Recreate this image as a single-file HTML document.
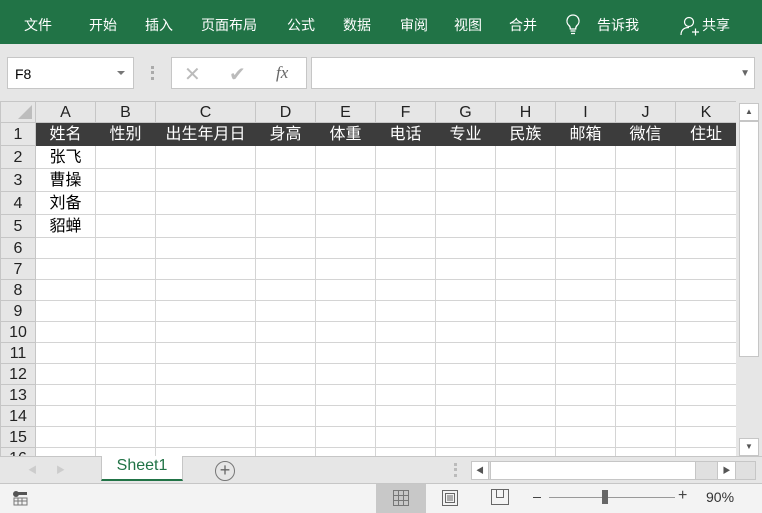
<!DOCTYPE html>
<html><head><meta charset="utf-8"><style>
*{margin:0;padding:0;box-sizing:border-box}
body{width:762px;height:513px;overflow:hidden;background:#e6e6e6;font-family:"Liberation Sans","Noto Sans CJK SC",sans-serif;position:relative}
.rib{position:absolute;left:0;top:0;width:762px;height:44px;background:#217346;color:#fff;font-size:14px}
.rib span{position:absolute;top:15px}
.abs{position:absolute}
table{position:absolute;left:0;top:101px;border-collapse:collapse;table-layout:fixed;width:736px}
td{border:1px solid #d4d4d4;background:#fff;padding:2px 0 0 0;text-align:center;font-size:16px;overflow:hidden;white-space:nowrap;line-height:18px}
tr.h td{background:#e6e6e6;border-color:#c6c6c6;color:#222;font-size:16px;height:21px;padding-top:1px}
td.rh{background:#e6e6e6;border-color:#c6c6c6;color:#222;text-align:center;font-size:16px}
tr.d td{background:#3c3c3c;color:#fff;border-color:#3c3c3c;height:23px}
tr.d td.rh{background:#e6e6e6;color:#222;border-color:#c6c6c6}
tr.c td{height:23px}
tr.n td{height:21px}
</style></head><body>
<div class="rib">
<span style="left:24px">文件</span><span style="left:89px">开始</span><span style="left:145px">插入</span><span style="left:201px">页面布局</span><span style="left:287px">公式</span><span style="left:343px">数据</span><span style="left:400px">审阅</span><span style="left:454px">视图</span><span style="left:509px">合并</span>
<svg class="abs" style="left:565px;top:14px" width="16" height="22" viewBox="0 0 16 22"><path d="M8 1a6 6 0 0 0-4 10.5c1 1 1.3 2 1.3 3.5h5.4c0-1.5.3-2.5 1.3-3.5A6 6 0 0 0 8 1zM5.5 17h5M6 19.5h4" fill="none" stroke="#fff" stroke-width="1.3"/></svg>
<span style="left:597px">告诉我</span>
<svg class="abs" style="left:680px;top:16px" width="20" height="20" viewBox="0 0 20 20"><circle cx="9" cy="6" r="4.5" fill="none" stroke="#fff" stroke-width="1.2"/><path d="M1 19c0-5 3-7.5 8-7.5M12 16h7M15.5 12.5v7" fill="none" stroke="#fff" stroke-width="1.2"/></svg>
<span style="left:702px">共享</span>
</div>
<div class="abs" style="left:7px;top:57px;width:127px;height:32px;background:#fff;border:1px solid #c6c6c6;font-size:14px;padding:8px 0 0 7px">F8<span class="abs" style="right:8px;top:13px;border:4px solid transparent;border-top:4px solid #777"></span></div>
<div class="abs" style="left:151px;top:66px;width:3px;height:14px;border-left:3px dotted #aaa"></div>
<div class="abs" style="left:171px;top:57px;width:136px;height:32px;background:#fff;border:1px solid #c6c6c6"><span class="abs" style="left:12px;top:4px;font-size:20px;color:#bbb">✕</span><span class="abs" style="left:57px;top:4px;font-size:20px;color:#bbb">✔</span><span class="abs" style="left:104px;top:5px;font-size:17px;color:#666;font-family:'Liberation Serif',serif;font-style:italic">fx</span></div>
<div class="abs" style="left:311px;top:57px;width:444px;height:32px;background:#fff;border:1px solid #c6c6c6"><span class="abs" style="right:4px;top:10px;font-size:10px;color:#666">▼</span></div>
<table>
<colgroup><col style="width:35px"><col style="width:60px"><col style="width:60px"><col style="width:100px"><col style="width:60px"><col style="width:60px"><col style="width:60px"><col style="width:60px"><col style="width:60px"><col style="width:60px"><col style="width:60px"><col style="width:61px"></colgroup>
<tr class="h"><td class="rh" style="position:relative"><svg class="abs" style="right:3px;bottom:3px" width="14" height="14"><path d="M14 0V14H0z" fill="#bdbdbd"/></svg></td><td>A</td><td>B</td><td>C</td><td>D</td><td>E</td><td>F</td><td>G</td><td>H</td><td>I</td><td>J</td><td>K</td></tr>
<tr class="d"><td class="rh">1</td><td>姓名</td><td>性别</td><td>出生年月日</td><td>身高</td><td>体重</td><td>电话</td><td>专业</td><td>民族</td><td>邮箱</td><td>微信</td><td>住址</td></tr>
<tr class="c"><td class="rh">2</td><td>张飞</td><td></td><td></td><td></td><td></td><td></td><td></td><td></td><td></td><td></td><td></td></tr>
<tr class="c"><td class="rh">3</td><td>曹操</td><td></td><td></td><td></td><td></td><td></td><td></td><td></td><td></td><td></td><td></td></tr>
<tr class="c"><td class="rh">4</td><td>刘备</td><td></td><td></td><td></td><td></td><td></td><td></td><td></td><td></td><td></td><td></td></tr>
<tr class="c"><td class="rh">5</td><td>貂蝉</td><td></td><td></td><td></td><td></td><td></td><td></td><td></td><td></td><td></td><td></td></tr>
<tr class="n"><td class="rh">6</td><td></td><td></td><td></td><td></td><td></td><td></td><td></td><td></td><td></td><td></td><td></td></tr>
<tr class="n"><td class="rh">7</td><td></td><td></td><td></td><td></td><td></td><td></td><td></td><td></td><td></td><td></td><td></td></tr>
<tr class="n"><td class="rh">8</td><td></td><td></td><td></td><td></td><td></td><td></td><td></td><td></td><td></td><td></td><td></td></tr>
<tr class="n"><td class="rh">9</td><td></td><td></td><td></td><td></td><td></td><td></td><td></td><td></td><td></td><td></td><td></td></tr>
<tr class="n"><td class="rh">10</td><td></td><td></td><td></td><td></td><td></td><td></td><td></td><td></td><td></td><td></td><td></td></tr>
<tr class="n"><td class="rh">11</td><td></td><td></td><td></td><td></td><td></td><td></td><td></td><td></td><td></td><td></td><td></td></tr>
<tr class="n"><td class="rh">12</td><td></td><td></td><td></td><td></td><td></td><td></td><td></td><td></td><td></td><td></td><td></td></tr>
<tr class="n"><td class="rh">13</td><td></td><td></td><td></td><td></td><td></td><td></td><td></td><td></td><td></td><td></td><td></td></tr>
<tr class="n"><td class="rh">14</td><td></td><td></td><td></td><td></td><td></td><td></td><td></td><td></td><td></td><td></td><td></td></tr>
<tr class="n"><td class="rh">15</td><td></td><td></td><td></td><td></td><td></td><td></td><td></td><td></td><td></td><td></td><td></td></tr>
<tr class="n"><td class="rh">16</td><td></td><td></td><td></td><td></td><td></td><td></td><td></td><td></td><td></td><td></td><td></td></tr>
</table>
<div class="abs" style="left:736px;top:101px;width:26px;height:356px;background:#e6e6e6"></div>
<div class="abs" style="left:739px;top:103px;width:20px;height:18px;background:#fff;border:1px solid #c6c6c6;font-size:8px;color:#555;text-align:center;line-height:16px">▲</div>
<div class="abs" style="left:739px;top:121px;width:20px;height:236px;background:#fff;border:1px solid #c6c6c6"></div>
<div class="abs" style="left:739px;top:438px;width:20px;height:18px;background:#fff;border:1px solid #c6c6c6;font-size:8px;color:#555;text-align:center;line-height:16px">▼</div>
<div class="abs" style="left:0;top:456px;width:762px;height:27px;background:#e6e6e6;border-top:1px solid #c6c6c6"></div>
<span class="abs" style="left:28px;top:463px;font-size:9px;color:#ccc">◀</span><span class="abs" style="left:56px;top:463px;font-size:9px;color:#ccc">▶</span>
<div class="abs" style="left:101px;top:456px;width:82px;height:25px;background:#fff;border:1px solid #c6c6c6;border-top:none;border-bottom:2px solid #217346;color:#217346;font-size:16px;text-align:center;line-height:20px">Sheet1</div>
<div class="abs" style="left:215px;top:461px;width:20px;height:20px;border:1.5px solid #777;border-radius:50%;color:#666;text-align:center;font-size:18px;line-height:16px">+</div>
<div class="abs" style="left:454px;top:463px;width:3px;height:14px;border-left:3px dotted #bbb"></div>
<div class="abs" style="left:471px;top:461px;width:285px;height:19px;background:#e0e0e0;border:1px solid #c6c6c6"></div>
<div class="abs" style="left:471px;top:461px;width:18px;height:19px;background:#fff;border:1px solid #c6c6c6;font-size:8px;color:#555;text-align:center;line-height:17px">◀</div>
<div class="abs" style="left:490px;top:461px;width:206px;height:19px;background:#fff;border:1px solid #c6c6c6"></div>
<div class="abs" style="left:717px;top:461px;width:19px;height:19px;background:#fff;border:1px solid #c6c6c6;font-size:8px;color:#555;text-align:center;line-height:17px">▶</div>
<div class="abs" style="left:0;top:483px;width:762px;height:30px;background:#f3f3f3;border-top:1px solid #c6c6c6"></div>
<svg class="abs" style="left:12px;top:490px" width="16" height="16"><circle cx="4" cy="4" r="3" fill="#555"/><rect x="6" y="2" width="9" height="3" fill="#555"/><path d="M2 8h13v7H2zM2 11h13M6 8v7M10 8v7" fill="none" stroke="#777" stroke-width="1"/></svg>
<div class="abs" style="left:376px;top:484px;width:50px;height:29px;background:#c8c8c8"></div>
<svg class="abs" style="left:393px;top:490px" width="16" height="16"><path d="M.5 .5h15v15H.5zM.5 5.5h15M.5 10.5h15M5.5 .5v15M10.5 .5v15" fill="none" stroke="#777"/></svg>
<svg class="abs" style="left:442px;top:490px" width="16" height="16"><path d="M.5 .5h15v15H.5zM3.5 3.5h9v9h-9zM5 6h6M5 8h6M5 10h6" fill="none" stroke="#666"/></svg>
<svg class="abs" style="left:491px;top:489px" width="18" height="16"><path d="M.5 .5h17v15H.5zM5.5 .5v8h7v-8" fill="none" stroke="#666"/></svg>
<div class="abs" style="left:533px;top:497px;width:8px;height:1px;background:#444"></div>
<div class="abs" style="left:549px;top:497px;width:126px;height:1px;background:#999"></div>
<div class="abs" style="left:602px;top:490px;width:6px;height:14px;background:#666"></div>
<span class="abs" style="left:678px;top:487px;font-size:16px;color:#444">+</span>
<span class="abs" style="left:706px;top:489px;font-size:14px;color:#333">90%</span>
</body></html>
